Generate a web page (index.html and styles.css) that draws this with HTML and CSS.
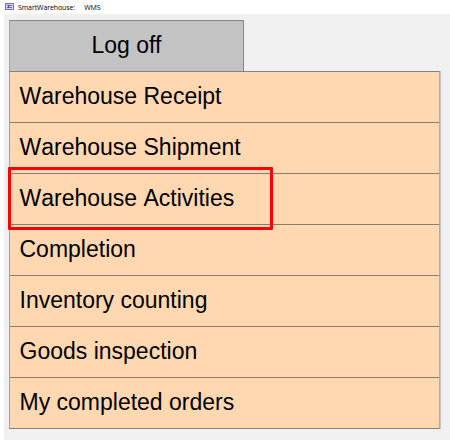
FILE: index.html
```
<!DOCTYPE html>
<html lang="en">
<head>
<meta charset="utf-8">
<title>SmartWarehouse: WMS</title>
<link rel="stylesheet" href="styles.css">
</head>
<body>
<header class="titlebar">
<svg class="app-icon" width="9" height="8" viewBox="0 0 9 8"><rect x=".5" y=".5" width="8" height="6" fill="#d8d4ec" stroke="#77739b"/><path d="M2 2.5h5M2 4.5h5" stroke="#7165c4"/><path d="M3.5 2v3" stroke="#4f3fa8"/></svg>
<span class="app-name">SmartWarehouse:</span><span>WMS</span>
</header>
<main class="window">
<button class="logoff">Log off</button>
<nav class="menu">
<a class="item">Warehouse Receipt</a>
<a class="item">Warehouse Shipment</a>
<a class="item selected">Warehouse Activities</a>
<a class="item">Completion</a>
<a class="item">Inventory counting</a>
<a class="item">Goods inspection</a>
<a class="item">My completed orders</a>
</nav>
</main>
</body>
</html>
```
FILE: styles.css
```
* { box-sizing: border-box; }
body { margin: 0; height: 440px; background: #fff; overflow: hidden; }
.titlebar { display: flex; align-items: center; height: 14px; padding-left: 5px; font: 7px "Open Sans", sans-serif; letter-spacing: -0.1px; color: #000; }
.app-icon { margin-right: 4px; }
.app-name { margin-right: 9px; }
.window { height: 426px; margin-left: 4px; padding: 6px 10px 0 5px; background: #f0f0f0; font-family: "Liberation Sans", sans-serif; font-kerning: none; }
.logoff { display: block; width: 235px; height: 52px; padding: 0 0 2px; border: 1px solid #868686; border-left-color: #a2a2a2; background: #c3c3c3; font: 23px "Liberation Sans", sans-serif; color: #000; }
.menu { margin-top: -1px; width: 431px; border: 1px solid #8a8178; border-left-color: #aaa096; border-right-color: #b0aaa3; box-shadow: 1px 0 #c4c4c4; }
.item { position: relative; display: flex; align-items: center; height: 51px; padding: 0 0 2px 9.5px; background: #ffd8b1; border-bottom: 1px solid #8c7c6d; font-size: 23px; color: #000; }
.item:last-child { border-bottom: 0; height: 50px; }
.selected::after { content: ""; box-sizing: border-box; position: absolute; left: -2px; top: -7px; width: 265px; height: 63px; border: 3px solid #f00; border-radius: 1px; z-index: 1; }
```
